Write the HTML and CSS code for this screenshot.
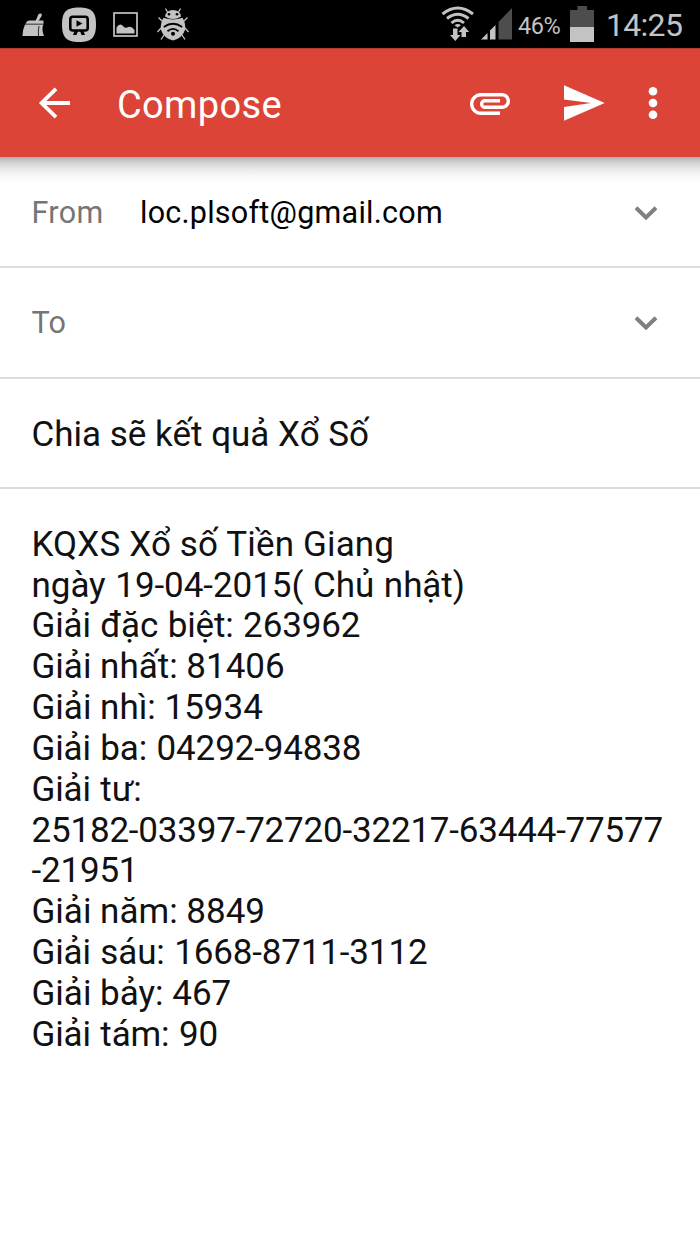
FILE: index.html
```html
<!DOCTYPE html>
<html lang="vi">
<head>
  <meta charset="UTF-8">
  <meta name="viewport" content="width=device-width, initial-scale=1.0">
  <title>Compose</title>
  <link rel="stylesheet" href="styles.css">
</head>
<body>

  <div class="status-bar">
    <div class="status-left">
      <!-- cleaner -->
      <svg width="24" height="26" viewBox="20 12 24 26" fill="#c3c3c3">
        <path d="M34.500 21L37.300 14.500Q38.500 13 40 13.500T40.600 16L37.500 21Z"/>
        <path d="M28 20.500H42.500V23.800H24.500Q25.500 21 28 20.500Z"/>
        <path d="M24 24.600H42.500Q41 27 41.500 30Q41.700 33 43 36H21.500Q21.800 29 24 24.600Z"/>
        <path d="M38 26Q37 31 37.500 36" stroke="#000" stroke-width=".8" fill="none"/>
      </svg>
      <!-- screen recorder -->
      <svg width="34" height="36" viewBox="62 7 34 36">
        <path d="M79 7.500C92 7.500 96 12 96 24.500S92 42 79 42S62 37 62 24.500S66 7.500 79 7.500Z" fill="#c3c3c3"/>
        <rect x="70.300" y="16.700" width="17.400" height="13.800" rx="2.500" fill="none" stroke="#000" stroke-width="2.600"/>
        <path d="M76.500 20.300L82.500 23.500L76.500 26.800Z"/>
        <path d="M74.500 31H78L76.500 35H73ZM80 31H83.500L85 35H81.500Z"/>
      </svg>
      <!-- picture -->
      <svg width="26" height="26" viewBox="113 13 26 26">
        <rect x="114" y="14" width="23" height="23" fill="none" stroke="#c3c3c3" stroke-width="1.700"/>
        <path d="M116.500 34.500V28.500Q120 23 123.500 27.500Q125 29.500 127 28.500Q131 26 134.500 31V34.500Z" fill="#c3c3c3"/>
      </svg>
      <!-- wifi bug -->
      <svg width="34" height="36" viewBox="155 8 34 36">
        <g fill="none" stroke="#c3c3c3" stroke-width="1.300">
          <path d="M167 14L164.500 9.500M177 14L179.500 9.500M161 22L157.500 18.500M183 22L186.500 18.500M160 29L156.500 33M184 29L187.500 33M163 36L160 40.500M181 36L184 40.500"/>
        </g>
        <path d="M164 17.500Q165 11 172 11T180 17.500Q176 20 172 20T164 17.500Z" fill="#c3c3c3"/>
        <path d="M162.500 18.800Q172 22 181.500 18.800Q185 24 184 31Q181 39.500 172 41.500Q163 39.500 160 31Q159 24 162.500 18.800Z" fill="#c3c3c3"/>
        <circle cx="168" cy="15.300" r="1.300"/><circle cx="176" cy="15.300" r="1.300"/>
        <path d="M162.800 28Q172 21.500 181.200 28M166.500 32.200Q172 27.500 177.500 32.200" fill="none" stroke="#000" stroke-width="1.800"/>
        <circle cx="172" cy="34.800" r="2"/>
      </svg>
    </div>
    <div class="status-right">
      <svg class="wifi" width="34" height="36" viewBox="441 7 34 36">
        <g fill="none" stroke="#c3c3c3" stroke-width="2.900">
          <path d="M442.500 15Q457.700 3 473 15"/>
          <path d="M447 19.500Q457.700 11 468.500 19.500"/>
          <path d="M451.500 24Q457.700 18.500 464 24"/>
        </g>
        <path d="M454.500 26.300Q457.700 23.800 461 26.300L457.700 28.500Z" fill="#c3c3c3"/>
        <path d="M453 29.500H457.500V36H460.500L455.300 42L450 36H453Z" fill="#c3c3c3"/>
        <path d="M461.500 38V33H458.500L464 27L469.200 33H466V38Z" fill="#c3c3c3"/>
      </svg>
      <svg class="signal" width="32" height="33" viewBox="481 9 32 33">
        <path d="M481 40.500L487.500 34V40.500ZM490 31.500L495.500 26V40.500H490Z" fill="#c3c3c3"/>
        <path d="M498.500 23L512 9V40.500H498.500Z" fill="#4d4d4d"/>
      </svg>
      <span class="percent">46%</span>
      <svg class="battery" width="24" height="36" viewBox="570 6 24 36">
        <path d="M570 10H577.500V6H587V10H594V27H570Z" fill="#4d4d4d"/>
        <path d="M570 27H594V42H570Z" fill="#c3c3c3"/>
      </svg>
      <span class="clock">14:25</span>
    </div>
  </div>

  <header class="toolbar">
    <svg class="back" width="34" height="32" viewBox="38 87 34 32">
      <path d="M56 88.800L41.600 103L56 117.200M41 103H70" fill="none" stroke="#fff" stroke-width="3.800"/>
    </svg>
    <h1 class="title">Compose</h1>
    <svg class="attach" width="48" height="48" viewBox="0 0 24 24" fill="#fff">
      <path d="M2 12.500C2 9.460 4.460 7 7.500 7H18c2.210 0 4 1.790 4 4s-1.790 4-4 4H9.500C8.120 15 7 13.880 7 12.500S8.120 10 9.500 10H17v1.700H9.410c-1 0-1 1.600 0 1.600H18c1.300 0 2.300-1 2.300-2.300s-1-2.300-2.300-2.300H7.500C5.400 8.700 3.700 10.400 3.700 12.500S5.400 16.300 7.500 16.300H17v1.700H7.500C4.460 18 2 15.540 2 12.500z"/>
    </svg>
    <svg class="send" width="42" height="36" viewBox="0 0 42 36" fill="#fff">
      <path d="M1 .3L41.700 18L1 35.700V22L28 18L1 14.500Z"/>
    </svg>
    <svg class="more" width="10" height="34" viewBox="0 0 10 34" fill="#fff">
      <circle cx="5" cy="5.200" r="4.300"/>
      <circle cx="5" cy="17" r="4.300"/>
      <circle cx="5" cy="28.800" r="4.300"/>
    </svg>
  </header>

  <main class="form">
    <div class="row">
      <span class="label">From</span>
      <span class="value">loc.plsoft@gmail.com</span>
      <svg class="chevron" width="24" height="16" viewBox="0 0 24 16">
        <path d="M2 2.800L12 12.500L22 2.800"/>
      </svg>
    </div>
    <div class="row">
      <span class="label">To</span>
      <svg class="chevron" width="24" height="16" viewBox="0 0 24 16">
        <path d="M2 2.800L12 12.500L22 2.800"/>
      </svg>
    </div>
    <div class="row subject">Chia sẽ kết quả Xổ Số</div>
    <div class="message">
      <p class="wide">KQXS Xổ số Tiền Giang</p>
      <p class="date">ngày 19-04-2015( Chủ nhật)</p>
      <p class="narrow">Giải đặc biệt: 263962</p>
      <p>Giải nhất: 81406</p>
      <p>Giải nhì: 15934</p>
      <p class="narrow">Giải ba: 04292-94838</p>
      <p class="narrow">Giải tư:</p>
      <p class="numbers">25182-03397-72720-32217-63444-77577</p>
      <p class="numbers">-21951</p>
      <p>Giải năm: 8849</p>
      <p class="narrow">Giải sáu: 1668-8711-3112</p>
      <p>Giải bảy: 467</p>
      <p class="narrow">Giải tám: 90</p>
    </div>
  </main>

</body>
</html>
```
FILE: styles.css
```css
* {
  margin: 0;
  padding: 0;
  box-sizing: border-box;
}

body {
  width: 700px;
  height: 1244px;
  overflow: hidden;
  font-family: Roboto, 'Noto Sans', sans-serif;
  background: #fff;
  color: #111;
}

svg {
  display: block;
  flex: none;
}

.status-bar {
  display: flex;
  justify-content: space-between;
  height: 48px;
  padding: 0 17px 0 20px;
  background: #000;
  color: #c3c3c3;
}

.status-left,
.status-right {
  display: flex;
  align-items: center;
}

.status-left {
  gap: 17px;
  padding: 2px 0 0 0.5px;
}

.signal {
  margin-left: 6px;
}

.percent {
  width: 57px;
  padding: 3px 0 0 5px;
  font-size: 23.5px;
  letter-spacing: -0.4px;
}

.clock {
  width: 89px;
  padding: 1px 0 0 12px;
  font-size: 32px;
  letter-spacing: -0.7px;
}

.toolbar {
  display: flex;
  align-items: center;
  height: 109px;
  padding: 0 42px 0 38px;
  background: #db4437;
  border-top: 1px solid #b8392e;
  color: #fff;
}

.title {
  flex: 1;
  margin-left: 45px;
  padding-top: 4px;
  font-size: 38px;
  font-weight: 400;
  letter-spacing: 0.35px;
}

.send {
  margin-left: 49px;
}

.more {
  margin-left: 43px;
}

/* shadow under the toolbar */
.form {
  padding-top: 1px;
  background: linear-gradient(#b0b0b0, #d0d0d0 5px, #e6e6e6 11px, #f8f8f8 19px, #fff 26px);
}

.row {
  display: flex;
  align-items: center;
  height: 110.25px;
  padding: 1px 42px 0 31.5px;
  border-bottom: 2px solid #dcdcdc;
  font-size: 30.5px;
}

.label {
  width: 108.5px;
  color: #757575;
  letter-spacing: 0.4px;
}

.value {
  color: #000;
  letter-spacing: 0.25px;
}

.chevron {
  margin-left: auto;
  fill: none;
  stroke: #808080;
  stroke-width: 4;
}

.subject {
  padding-top: 4px;
  font-size: 35px;
}

.message {
  padding: 36px 31.5px;
  font-size: 35px;
  line-height: 40.83px;
  white-space: nowrap;
}

.wide {
  letter-spacing: 0.15px;
}

.date {
  letter-spacing: -0.05px;
  word-spacing: 1px;
}

.narrow {
  letter-spacing: -0.15px;
  word-spacing: 1px;
}

.numbers {
  letter-spacing: -0.2px;
}
```
